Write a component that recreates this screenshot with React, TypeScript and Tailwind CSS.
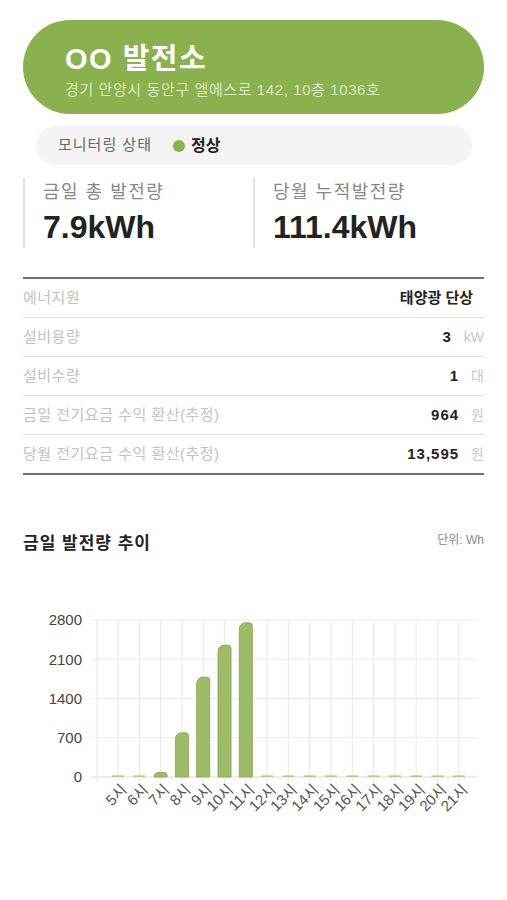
const font = { fontFamily: '"Liberation Sans", "Noto Sans CJK KR", sans-serif' };

const rows = [
  { label: '에너지원', value: '태양광 단상', unit: '' },
  { label: '설비용량', value: '3', unit: 'kW' },
  { label: '설비수량', value: '1', unit: '대' },
  { label: '금일 전기요금 수익 환산(추정)', value: '964', unit: '원' },
  { label: '당월 전기요금 수익 환산(추정)', value: '13,595', unit: '원' },
];

const hours = [5, 6, 7, 8, 9, 10, 11, 12, 13, 14, 15, 16, 17, 18, 19, 20, 21];
const values = [0, 0, 80, 790, 1780, 2350, 2750, 0, 0, 0, 0, 0, 0, 0, 0, 0, 0];

// page coordinates, the svg viewBox starts at y=590
const BASE = 777;
const TOP = 620;
const colX = (i: number) => 118 + i * 21.3;
const valY = (v: number) => BASE - ((BASE - TOP) * v) / 2800;

function barPath(cx: number, v: number) {
  const w = 13;
  const x0 = cx - w / 2;
  const x1 = cx + w / 2;
  const y = valY(v);
  const h = BASE - y;
  const rl = Math.min(7, h);
  const rr = Math.min(3, h);
  return `M${x0},${BASE} L${x0},${y + rl} Q${x0},${y} ${x0 + rl},${y} L${x1 - rr},${y} Q${x1},${y} ${x1},${y + rr} L${x1},${BASE} Z`;
}

function Chart() {
  return (
    <svg width="507" height="260" viewBox="0 590 507 260" className="block">
      {[0, 700, 1400, 2100, 2800].map((t) => (
        <g key={t}>
          <line x1={92} x2={477} y1={valY(t)} y2={valY(t)} stroke={t === 0 ? '#dcdcdc' : '#ebebeb'} strokeWidth={1.2} />
          <text x={82} y={valY(t)} dy="0.36em" textAnchor="end" fontSize={15} fill="#444">
            {t}
          </text>
        </g>
      ))}
      <line x1={97} x2={97} y1={TOP} y2={BASE + 5} stroke="#ebebeb" strokeWidth={1.2} />
      {hours.map((hr, i) => (
        <line key={hr} x1={colX(i)} x2={colX(i)} y1={TOP} y2={BASE + 5} stroke="#ebebeb" strokeWidth={1.2} />
      ))}
      {values.map((v, i) =>
        v > 0 ? (
          <path key={i} d={barPath(colX(i), v)} fill="#9dbb69" stroke="#8fae5a" strokeWidth={1} />
        ) : (
          <line key={i} x1={colX(i) - 6} x2={colX(i) + 6} y1={BASE - 0.8} y2={BASE - 0.8} stroke="#b3cb8a" strokeWidth={1.6} />
        )
      )}
      {hours.map((hr, i) => (
        <text
          key={hr}
          transform={`translate(${colX(i) + 6} ${BASE + 10}) rotate(-45)`}
          textAnchor="end"
          dy="0.35em"
          fontSize={15}
          fill="#555"
        >
          {hr}시
        </text>
      ))}
    </svg>
  );
}

export default function App() {
  return (
    <div className="min-h-screen w-[507px] bg-white" style={font}>
      <div className="px-[23px] pt-5">
        <section className="h-[94px] rounded-full bg-[#8ab14d] pl-[42px] pt-[21px]">
          <h1 className="text-[29px] leading-[36px] font-bold tracking-[1.5px] text-white">OO 발전소</h1>
          <p className="mt-[4px] text-[15px] leading-[18px] tracking-[0.6px] text-white/70">
            경기 안양시 동안구 엘에스로 142, 10층 1036호
          </p>
        </section>

        <div className="mt-[12px] ml-[13px] mr-[12px] flex h-[39px] items-center rounded-full bg-[#f4f4f4] pl-[22px]">
          <span className="text-[15px] tracking-[1px] text-[#666]">모니터링 상태</span>
          <span className="ml-[21px] h-[12px] w-[12px] rounded-full bg-[#8ab14d]" />
          <span className="ml-[6px] text-[16px] font-bold text-[#222]">정상</span>
        </div>

        <div className="mt-[13px] flex">
          <div className="w-[230px] border-l-2 border-[#e2e2e2] pl-[18px] pt-[3px] pb-[2px]">
            <div className="text-[18px] leading-[22px] tracking-[1.5px] text-[#888]">금일 총 발전량</div>
            <div className="mt-[5px] text-[32px] leading-[38px] font-bold text-[#222]">7.9kWh</div>
          </div>
          <div className="flex-1 border-l-2 border-[#e2e2e2] pl-[18px] pt-[3px] pb-[2px]">
            <div className="text-[18px] leading-[22px] tracking-[1.5px] text-[#888]">당월 누적발전량</div>
            <div className="mt-[5px] text-[32px] leading-[38px] font-bold text-[#222]">111.4kWh</div>
          </div>
        </div>

        <div className="mt-[29px] border-t-2 border-b-2 border-[#6e6e6e]">
          {rows.map((r, i) => (
            <div
              key={r.label}
              className={`flex items-center justify-between ${i > 0 ? 'h-[39px] border-t border-[#dedede]' : 'h-[38px]'}`}
            >
              <span className="text-[15px] tracking-[0.5px] text-[#c2c2c2]">{r.label}</span>
              <span className="flex items-center">
                {r.unit ? (
                  <span className="text-[15px] font-bold tracking-[1px] text-[#222]">{r.value}</span>
                ) : (
                  <span className="mr-[11px] text-[15px] font-bold text-[#222]">{r.value}</span>
                )}
                {r.unit && <span className="ml-[12px] text-[14px] text-[#c8c8c8]">{r.unit}</span>}
              </span>
            </div>
          ))}
        </div>

        <div className="mt-[57px] flex items-start justify-between">
          <h2 className="text-[17px] leading-[24px] font-bold tracking-[1px] text-[#222]">금일 발전량 추이</h2>
          <span className="text-[12px] leading-[16px] text-[#888]">단위: Wh</span>
        </div>
      </div>

      <div className="mt-[34px]">
        <Chart />
      </div>
    </div>
  );
}
